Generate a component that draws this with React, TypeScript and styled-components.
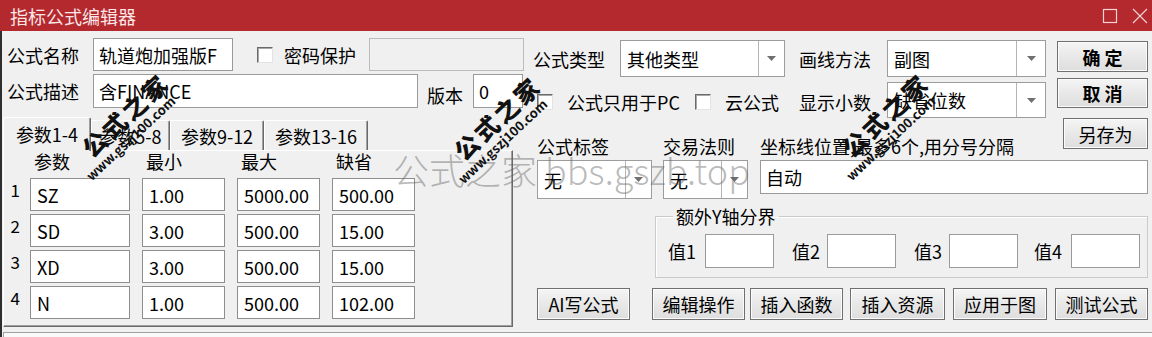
import React from 'react'
import styled, { createGlobalStyle } from 'styled-components'

const GlobalStyle = createGlobalStyle`
  html, body {
    margin: 0;
    padding: 0;
    background: #f0f0f0;
  }
  body {
    font-family: "Noto Sans CJK SC", "Microsoft YaHei", sans-serif;
    font-size: 18px;
    color: #000;
  }
`

const Window = styled.div`
  position: relative;
  width: 1152px;
  height: 337px;
  overflow: hidden;
  background: #f0f0f0;
  display: flex;
  flex-direction: column;
`

const TitleBar = styled.div`
  height: 31px;
  flex: none;
  background: #b3292e;
  color: #fbe6e7;
  display: flex;
  align-items: center;
  justify-content: space-between;
  padding: 0 4px 0 10px;
  font-size: 18px;
`

const TitleButtons = styled.div`
  display: flex;
  gap: 14px;
  align-items: center;
`

const Body = styled.div`
  flex: 1;
  display: flex;
  flex-direction: column;
  border-left: 2px solid #2e2e2e;
`

const Top = styled.div`
  height: 86px;
  flex: none;
  display: flex;
`

const Col = styled.div<{ $w: number; $ml?: number; $pl?: number }>`
  width: ${p => p.$w}px;
  margin-left: ${p => p.$ml || 0}px;
  padding-left: ${p => p.$pl || 0}px;
  box-sizing: border-box;
  display: flex;
  flex-direction: column;
  flex: none;
`

const Row = styled.div<{ $mt?: number; $h: number; $align?: string }>`
  display: flex;
  align-items: ${p => p.$align || 'center'};
  margin-top: ${p => p.$mt || 0}px;
  height: ${p => p.$h}px;
  flex: none;
`

const Label = styled.span<{ $w?: number; $ml?: number; $mt?: number }>`
  flex: none;
  width: ${p => (p.$w ? `${p.$w}px` : 'auto')};
  margin-left: ${p => p.$ml || 0}px;
  margin-top: ${p => p.$mt || 0}px;
  line-height: 20px;
  white-space: nowrap;
`

const TextBox = styled.div<{ $w: number; $h?: number; $ml?: number; $disabled?: boolean }>`
  flex: none;
  box-sizing: border-box;
  width: ${p => p.$w}px;
  height: ${p => p.$h || 33}px;
  margin-left: ${p => p.$ml || 0}px;
  border: 1px solid ${p => (p.$disabled ? '#bcbcbc' : '#9a9a9a')};
  background: ${p => (p.$disabled ? '#f0f0f0' : '#fff')};
  padding-left: 5px;
  display: flex;
  align-items: center;
  white-space: nowrap;
  overflow: hidden;
`

const CheckBox = styled.span<{ $ml?: number; $mt?: number }>`
  flex: none;
  box-sizing: border-box;
  width: 16px;
  height: 16px;
  margin-left: ${p => p.$ml || 0}px;
  margin-top: ${p => p.$mt || 0}px;
  background: #fff;
  border: 1px solid;
  border-color: #6a6a6a #e3e3e3 #e3e3e3 #6a6a6a;
  box-shadow: inset 1px 1px 0 #a8a8a8;
`

const Combo = styled.div<{ $w: number; $h: number; $ml?: number }>`
  flex: none;
  box-sizing: border-box;
  display: flex;
  width: ${p => p.$w}px;
  height: ${p => p.$h}px;
  margin-left: ${p => p.$ml || 0}px;
  border: 1px solid #9c9c9c;
  background: #fff;
`

const ComboText = styled.div`
  flex: 1;
  padding-left: 6px;
  display: flex;
  align-items: center;
  white-space: nowrap;
  overflow: hidden;
`

const ComboArrow = styled.div<{ $w: number }>`
  flex: none;
  width: ${p => p.$w}px;
  border-left: 1px solid #b4b4b4;
  display: flex;
  align-items: center;
  justify-content: center;
`

const Button = styled.div<{ $w: number; $h?: number; $ml?: number; $mt?: number; $strong?: boolean }>`
  flex: none;
  box-sizing: border-box;
  width: ${p => p.$w}px;
  height: ${p => p.$h || 32}px;
  margin-left: ${p => p.$ml || 0}px;
  margin-top: ${p => p.$mt || 0}px;
  border: 1px solid #707070;
  background: linear-gradient(#f5f5f5, #e8e8e8 50%, #dedede);
  box-shadow: inset 0 0 0 1px #fbfbfb;
  display: flex;
  align-items: center;
  justify-content: center;
  font-weight: ${p => (p.$strong ? 600 : 400)};
  white-space: pre;
`

const Bottom = styled.div`
  height: 215px;
  flex: none;
  display: flex;
`

const Tabs = styled.div`
  margin-left: 1px;
  width: 510px;
  flex: none;
  display: flex;
  flex-direction: column;
`

const TabStrip = styled.div`
  height: 33px;
  display: flex;
  align-items: flex-start;
  flex: none;
`

const Tab = styled.div<{ $w: number; $active?: boolean }>`
  position: relative;
  z-index: ${p => (p.$active ? 1 : 0)};
  box-sizing: border-box;
  width: ${p => p.$w}px;
  height: ${p => (p.$active ? 34 : 30)}px;
  margin-top: ${p => (p.$active ? 0 : 3)}px;
  background: #f0f0f0;
  border-top: 1px solid #fff;
  border-left: 1px solid #fff;
  border-right: 1px solid #696969;
  box-shadow: inset -1px 0 0 #a0a0a0;
  border-radius: 2px 2px 0 0;
  display: flex;
  align-items: center;
  justify-content: center;
  padding-bottom: ${p => (p.$active ? 2 : 0)}px;
  white-space: nowrap;
`

const Panel = styled.div`
  height: 177px;
  box-sizing: border-box;
  border-top: 1px solid #fff;
  border-left: 1px solid #fff;
  border-right: 1px solid #696969;
  border-bottom: 1px solid #696969;
  box-shadow: inset -1px -1px 0 #a0a0a0;
`

const ParamGrid = styled.div`
  display: grid;
  grid-template-columns: 14px 100px 83px 83px 83px;
  grid-template-rows: 24px repeat(4, 33px);
  column-gap: 12px;
  row-gap: 3px;
`

const HeadCell = styled.span`
  line-height: 20px;
  padding-left: 4px;
  align-self: start;
`

const RowNum = styled.span`
  font-size: 17px;
  line-height: 24px;
  justify-self: end;
  margin-right: -2px;
  align-self: start;
`

const Cell = styled.div`
  box-sizing: border-box;
  border: 1px solid #8e8e8e;
  background: #fff;
  padding-left: 6px;
  display: flex;
  align-items: center;
`

const Right = styled.div`
  margin-left: 24px;
  width: 611px;
  flex: none;
  display: flex;
  flex-direction: column;
`

const GroupBox = styled.fieldset`
  box-sizing: border-box;
  margin: 5px 0 0 118px;
  padding: 6px 0 0 12px;
  width: 493px;
  height: 74px;
  border: 1px solid #cacaca;
  box-shadow: inset 1px 1px 0 #fff;
  display: flex;
  align-items: center;
  min-inline-size: 0;
`

const Legend = styled.legend`
  padding: 0 3px;
  margin-left: 5px;
  line-height: 24px;
`

const ValueBox = styled.div<{ $ml: number }>`
  display: flex;
  align-items: center;
  margin-left: ${p => p.$ml}px;
  flex: none;
`

const Overlay = styled.div`
  position: absolute;
  inset: 0;
  pointer-events: none;
  z-index: 5;
`

const SiteMark = styled.div`
  position: absolute;
  left: 393px;
  top: 147px;
  font-size: 36px;
  font-weight: 300;
  line-height: 44px;
  color: rgba(100, 100, 100, 0.45);
  white-space: pre;
`

const Stamp = styled.div<{ $x: number; $y: number }>`
  position: absolute;
  left: ${p => p.$x}px;
  top: ${p => p.$y - 42}px;
  height: 42px;
  transform-origin: 0 100%;
  transform: rotate(-43deg);
  display: flex;
  flex-direction: column;
  color: #111;
  white-space: nowrap;
`

const StampMark = styled.span`
  font-size: 24px;
  font-weight: 900;
  line-height: 28px;
  letter-spacing: 3px;
  margin-left: 16px;
`

const StampUrl = styled.span`
  font-size: 13px;
  font-weight: 700;
  line-height: 14px;
`

const Editor = styled.div`
  flex: 1;
  margin-left: 1px;
  border-top: 1px solid #a0a0a0;
  border-left: 1px solid #a0a0a0;
  background: #f9f9f9;
`

const Arrow = () => (
  <svg width="9" height="5" viewBox="0 0 9 5">
    <path d="M0 0H9L4.5 5Z" fill="#6f6f6f" />
  </svg>
)

const Select = ({ w, h, arrow, ml, children }: { w: number; h: number; arrow: number; ml?: number; children: React.ReactNode }) => (
  <Combo $w={w} $h={h} $ml={ml}>
    <ComboText>{children}</ComboText>
    <ComboArrow $w={arrow}>
      <Arrow />
    </ComboArrow>
  </Combo>
)

const params = [
  ['SZ', '1.00', '5000.00', '500.00'],
  ['SD', '3.00', '500.00', '15.00'],
  ['XD', '3.00', '500.00', '15.00'],
  ['N', '1.00', '500.00', '102.00'],
]

const tabs = [
  { label: '参数1-4', w: 88 },
  { label: '参数5-8', w: 79 },
  { label: '参数9-12', w: 94 },
  { label: '参数13-16', w: 104 },
]

const values = [
  { label: '值1', w: 37, ml: 0 },
  { label: '值2', w: 35, ml: 18 },
  { label: '值3', w: 35, ml: 18 },
  { label: '值4', w: 37, ml: 16 },
]

const bottomButtons = [
  { label: 'AI写公式', w: 93, ml: 0 },
  { label: '编辑操作', w: 93, ml: 22 },
  { label: '插入函数', w: 93, ml: 5 },
  { label: '插入资源', w: 95, ml: 7 },
  { label: '应用于图', w: 94, ml: 8 },
  { label: '测试公式', w: 93, ml: 8 },
]

export default function App() {
  return (
    <>
      <GlobalStyle />
      <Window>
        <TitleBar>
          <span>指标公式编辑器</span>
          <TitleButtons>
            <svg width="16" height="16" viewBox="0 0 16 16">
              <rect x="1.5" y="1.5" width="13" height="13" fill="none" stroke="#f3d3d5" strokeWidth="1.2" />
            </svg>
            <svg width="16" height="16" viewBox="0 0 16 16">
              <path d="M1 1L15 15M15 1L1 15" stroke="#f3d3d5" strokeWidth="1.2" />
            </svg>
          </TitleButtons>
        </TitleBar>
        <Body>
          <Top>
            <Col $w={521} $pl={5}>
              <Row $mt={7} $h={33}>
                <Label $w={86}>公式名称</Label>
                <TextBox $w={140}>轨道炮加强版F</TextBox>
                <CheckBox $ml={24} />
                <Label $ml={11} $w={72}>密码保护</Label>
                <TextBox $w={155} $ml={13} $disabled />
              </Row>
              <Row $mt={3} $h={34}>
                <Label $w={86}>公式描述</Label>
                <TextBox $w={325} $h={34}>含FINANCE</TextBox>
                <Label $ml={9} $w={36} $mt={8}>版本</Label>
                <TextBox $w={50} $h={34} $ml={10}>0</TextBox>
              </Row>
            </Col>
            <Col $w={513} $ml={10}>
              <Row $mt={9} $h={37}>
                <Label $w={87}>公式类型</Label>
                <Select w={165} h={37} arrow={25}>其他类型</Select>
                <Label $ml={14} $w={88}>画线方法</Label>
                <Select w={159} h={37} arrow={28}>副图</Select>
              </Row>
              <Row $mt={5} $h={36}>
                <CheckBox $ml={4} $mt={4} />
                <Label $ml={14} $w={114} $mt={4}>公式只用于PC</Label>
                <CheckBox $ml={14} $mt={4} />
                <Label $ml={14} $w={60} $mt={4}>云公式</Label>
                <Label $ml={14} $w={88} $mt={4}>显示小数</Label>
                <Select w={159} h={36} arrow={28}>缺省位数</Select>
              </Row>
            </Col>
            <Col $w={91} $ml={11}>
              <Button $w={91} $h={31} $mt={10} $strong>{'确 定'}</Button>
              <Button $w={91} $h={30} $mt={6} $strong>{'取 消'}</Button>
            </Col>
          </Top>
          <Bottom>
            <Tabs>
              <TabStrip>
                {tabs.map((t, i) => (
                  <Tab key={t.label} $w={t.w} $active={i === 0}>{t.label}</Tab>
                ))}
              </TabStrip>
              <Panel>
                <ParamGrid>
                  <span />
                  <HeadCell>参数</HeadCell>
                  <HeadCell>最小</HeadCell>
                  <HeadCell>最大</HeadCell>
                  <HeadCell>缺省</HeadCell>
                  {params.map((row, i) => (
                    <React.Fragment key={i}>
                      <RowNum>{i + 1}</RowNum>
                      {row.map((v, j) => (
                        <Cell key={j}>{v}</Cell>
                      ))}
                    </React.Fragment>
                  ))}
                </ParamGrid>
              </Panel>
            </Tabs>
            <Right>
              <Row $h={33} $align="flex-start">
                <Label $w={126} $mt={19}>公式标签</Label>
                <Label $w={97} $mt={19}>交易法则</Label>
                <Label $mt={19}>坐标线位置,最多6个,用分号分隔</Label>
                <Button $w={85} $h={31} $mt={1} style={{ marginLeft: 'auto' }}>另存为</Button>
              </Row>
              <Row $mt={10} $h={39} $align="flex-start">
                <Select w={115} h={39} arrow={25}>无</Select>
                <Select w={85} h={39} arrow={25} ml={11}>无</Select>
                <TextBox $w={388} $h={34} $ml={12}>自动</TextBox>
              </Row>
              <GroupBox>
                <Legend>额外Y轴分界</Legend>
                {values.map(v => (
                  <ValueBox key={v.label} $ml={v.ml}>
                    <Label $w={v.w}>{v.label}</Label>
                    <TextBox $w={69} $h={34} />
                  </ValueBox>
                ))}
              </GroupBox>
              <Row $mt={10} $h={32}>
                {bottomButtons.map(b => (
                  <Button key={b.label} $w={b.w} $ml={b.ml}>{b.label}</Button>
                ))}
              </Row>
            </Right>
          </Bottom>
          <Editor />
        </Body>
        <Overlay>
          <SiteMark>公式之家 bbs.gszb.top</SiteMark>
          <Stamp $x={93} $y={183}>
            <StampMark>公式之家</StampMark>
            <StampUrl>www.gszj100.com</StampUrl>
          </Stamp>
          <Stamp $x={465} $y={186}>
            <StampMark>公式之家</StampMark>
            <StampUrl>www.gszj100.com</StampUrl>
          </Stamp>
          <Stamp $x={853} $y={183}>
            <StampMark>公式之家</StampMark>
            <StampUrl>www.gszj100.com</StampUrl>
          </Stamp>
        </Overlay>
      </Window>
    </>
  )
}
